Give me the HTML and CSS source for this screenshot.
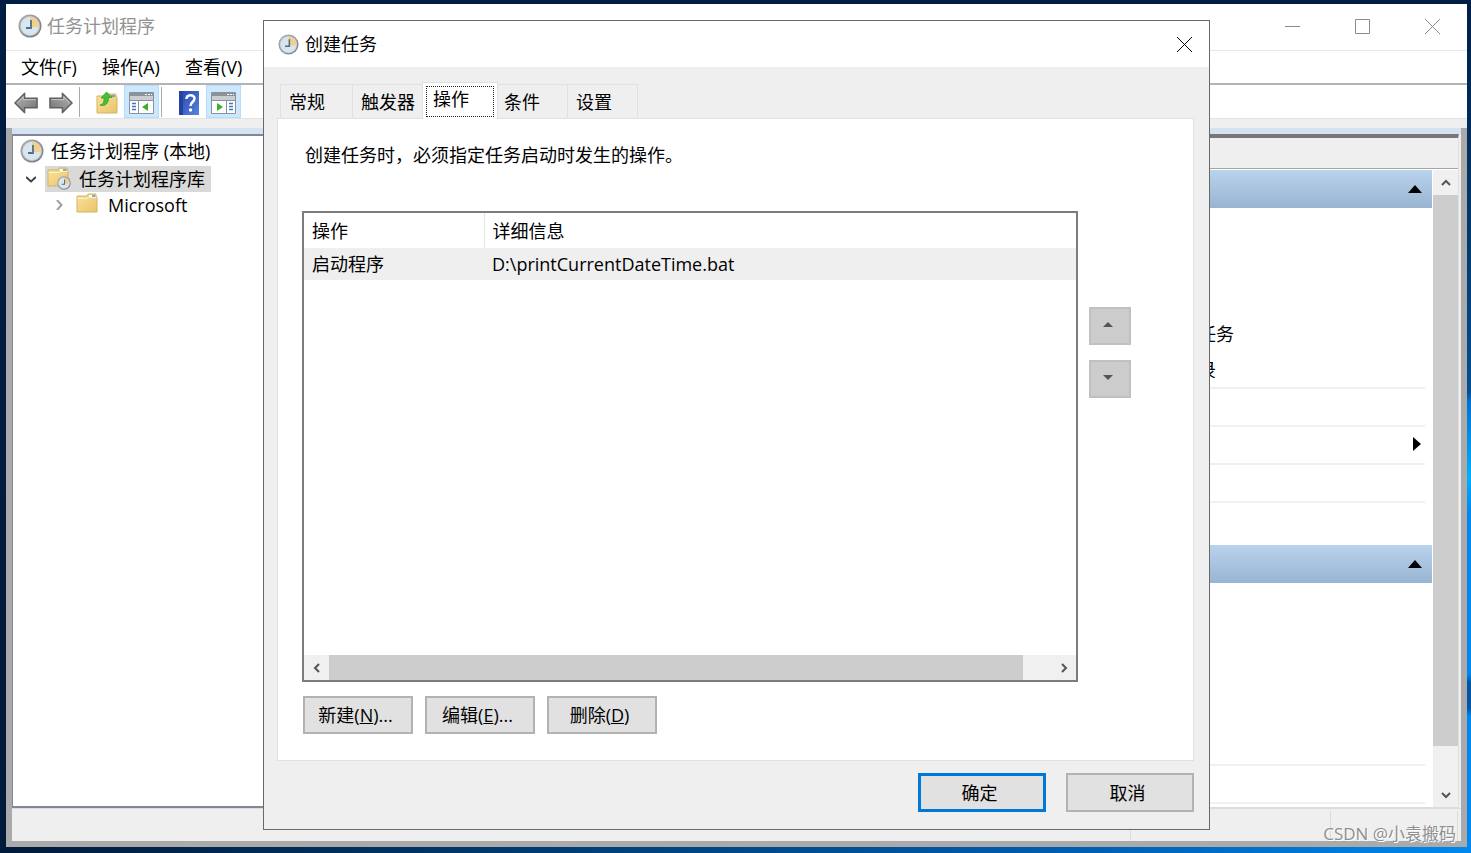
FILE: index.html
```
<!DOCTYPE html>
<html lang="zh-CN">
<head>
  <meta charset="UTF-8" />
  <title>任务计划程序</title>
  <link rel="stylesheet" href="styles.css">
</head>
<body>
  <!-- shared icons -->
  <svg class="sprites" aria-hidden="true">
    <linearGradient id="metal" x1="0" y1="0" x2="1" y2="1">
      <stop offset="0" stop-color="#a9adb0" /><stop offset="1" stop-color="#777b7e" />
    </linearGradient>
    <linearGradient id="paper" x1="0" y1="0" x2="1" y2="1">
      <stop offset="0" stop-color="#fbe39b" /><stop offset="1" stop-color="#e8c46c" />
    </linearGradient>
    <linearGradient id="steel" x1="0" y1="0" x2="1" y2="1">
      <stop offset="0" stop-color="#b8b8b8" /><stop offset="1" stop-color="#707070" />
    </linearGradient>
    <linearGradient id="book" x1="0" y1="0" x2="1" y2="1">
      <stop offset="0" stop-color="#2344b0" /><stop offset="1" stop-color="#5b83dd" />
    </linearGradient>
    <symbol id="clock" viewBox="0 0 24 24">
      <circle cx="12" cy="12" r="11.5" fill="url(#metal)" />
      <circle cx="12" cy="12" r="10" fill="#c6cacc" />
      <circle cx="12" cy="12" r="9" fill="#d9e6f0" />
      <path d="M12 13V3a9 9 0 0 1 9 10z" fill="#f3cf8c" />
      <path d="M13 6v8H8" stroke="#4f6f8a" stroke-width="1.8" fill="none" />
    </symbol>
    <symbol id="folder" viewBox="0 0 22 20">
      <path d="M1 3h10l1-2h8v3h1v15H1z" fill="url(#paper)" stroke="#d3b365" />
      <path d="M13 3h6" stroke="#fff" stroke-width="2" />
      <path d="M16 3h3" stroke="#3f93df" stroke-width="1.5" />
      <path d="M1.5 5.500H12l1-1h7.500" stroke="#fff3c8" fill="none" />
    </symbol>
    <symbol id="arrow" viewBox="0 0 26 22">
      <path d="M1 11 11 1v5h13v10H11v5z" fill="url(#steel)" stroke="#606060" stroke-width="1.500" />
      <path d="M3.500 10.500 9.500 4.500v3h13" stroke="#c8c8c8" fill="none" />
    </symbol>
  </svg>

  <div class="window">
    <header class="titlebar">
      <svg class="app-icon"><use href="#clock" /></svg>
      <h1>任务计划程序</h1>
      <div class="window-controls">
        <button aria-label="最小化"><svg viewBox="0 0 15 15"><path d="M0 7.500h15" /></svg></button>
        <button aria-label="最大化"><svg viewBox="0 0 15 15"><path d="M.5.5h14v14H.5z" /></svg></button>
        <button aria-label="关闭"><svg viewBox="0 0 15 15"><path d="M0 0l15 15M15 0 0 15" /></svg></button>
      </div>
    </header>

    <nav class="menubar">
      <button>文件(F)</button>
      <button>操作(A)</button>
      <button>查看(V)</button>
    </nav>

    <div class="toolbar">
      <button aria-label="后退"><svg class="nav-arrow" viewBox="0 0 26 22"><use href="#arrow" /></svg></button>
      <button aria-label="前进"><svg class="nav-arrow" viewBox="0 0 26 22"><use href="#arrow" transform="matrix(-1 0 0 1 26 0)" /></svg></button>
      <span class="separator"></span>
      <button aria-label="上一级">
        <svg width="22" height="24" viewBox="0 0 22 24">
          <path d="M1 5h10l1-2h8v3h1v16H1z" fill="url(#paper)" stroke="#d3b365" />
          <path d="M15 5h4" stroke="#3f93df" stroke-width="1.500" />
          <path d="M4 14c4-1 4-4 4-7H5L10.500 1 16 6.500h-3.500C13 12 9 16 4 14z" fill="#45bf35" stroke="#2f9327" stroke-width=".7" />
        </svg>
      </button>
      <button class="active" aria-label="控制台树">
        <svg width="25" height="22" viewBox="0 0 25 22">
          <path d="M.5.500h24v21H.5z" fill="#fff" stroke="#8a929b" />
          <path d="M1 1h23v3H1z" fill="#8a929b" />
          <path d="M16 2.500h2M19 2.500h2M22 2.500h1" stroke="#fff" />
          <path d="M1 4h23v4H1z" fill="#c9ced3" />
          <path d="M1 8.500h23M9.500 9v12" stroke="#8a929b" />
          <path d="M3 11.500h4M3 14.500h4M3 17.500h4" stroke="#3e78c5" stroke-width="1.500" />
          <path d="M19 11v8l-6-4z" fill="#3dae2b" />
        </svg>
      </button>
      <span class="separator"></span>
      <button aria-label="帮助">
        <svg width="20" height="24" viewBox="0 0 20 24">
          <path d="M0 0h20v24H0z" fill="url(#book)" />
          <path d="M0 0h4v24H0z" fill="#24429f" />
          <path d="M7.500 8c0-5 8-5 8-.5 0 3.500-4 3.500-4 7.500" stroke="#fff" stroke-width="2.500" fill="none" />
          <circle cx="11.500" cy="19" r="1.700" fill="#fff" />
        </svg>
      </button>
      <button class="active" aria-label="操作窗格">
        <svg width="25" height="22" viewBox="0 0 25 22">
          <path d="M.5.500h24v21H.5z" fill="#fff" stroke="#8a929b" />
          <path d="M1 1h23v3H1z" fill="#8a929b" />
          <path d="M16 2.500h2M19 2.500h2M22 2.500h1" stroke="#fff" />
          <path d="M1 4h23v4H1z" fill="#c9ced3" />
          <path d="M1 8.500h23M15.500 9v12" stroke="#8a929b" />
          <path d="M18 11.500h4M18 14.500h4M18 17.500h4" stroke="#3e78c5" stroke-width="1.500" />
          <path d="M6 11v8l6-4z" fill="#3dae2b" />
        </svg>
      </button>
    </div>

    <div class="workspace">
      <div class="panes">
        <ul class="tree">
          <li><svg class="tree-clock"><use href="#clock" /></svg><span>任务计划程序 (本地)</span></li>
          <li class="library">
            <svg class="twisty" viewBox="0 0 10 10"><path d="M0 3l5 4.500L10 3" /></svg>
            <span class="selected">
              <svg class="library-icon" viewBox="0 0 25 23">
                <use href="#folder" width="22" height="20" />
                <use href="#clock" x="10" y="9" width="14" height="14" />
              </svg>
              任务计划程序库
            </span>
          </li>
          <li class="child">
            <svg class="twisty closed" viewBox="0 0 10 10"><path d="M3 0l4.500 5L3 10" /></svg>
            <svg class="folder-icon"><use href="#folder" /></svg>
            <span>Microsoft</span>
          </li>
        </ul>

        <aside class="actions">
          <div class="actions-header"></div>
          <div class="actions-body">
            <div class="actions-list">
              <div class="group"><svg viewBox="0 0 14 8"><path d="M0 8l7-8 7 8z" /></svg></div>
              <div class="group-items first">
                <p class="task">任务</p>
                <p class="task">录</p>
                <div class="item"></div>
                <div class="item more"><svg viewBox="0 0 8 14"><path d="M0 0l8 7-8 7z" /></svg></div>
                <div class="item"></div>
                <div class="item"></div>
              </div>
              <div class="group"><svg viewBox="0 0 14 8"><path d="M0 8l7-8 7 8z" /></svg></div>
              <div class="group-items second">
                <div class="item"></div>
                <div class="item"></div>
              </div>
            </div>
            <div class="scrollbar vertical">
              <button aria-label="向上滚动"><svg viewBox="0 0 10 10"><path d="M1 7l4-4 4 4" /></svg></button>
              <div class="thumb"></div>
              <button aria-label="向下滚动"><svg viewBox="0 0 10 10"><path d="M1 3l4 4 4-4" /></svg></button>
            </div>
          </div>
        </aside>
      </div>
      <footer class="statusbar"><span></span><span></span></footer>
    </div>
  </div>

  <section class="dialog" role="dialog" aria-labelledby="dialogTitle">
    <header class="dialog-title">
      <svg><use href="#clock" /></svg>
      <h2 id="dialogTitle">创建任务</h2>
      <button aria-label="关闭"><svg viewBox="0 0 15 15"><path d="M0 0l15 15M15 0 0 15" /></svg></button>
    </header>

    <div class="dialog-body">
      <div class="tabs" role="tablist">
        <button role="tab">常规</button>
        <button role="tab">触发器</button>
        <button role="tab" class="current" aria-selected="true"><span>操作</span></button>
        <button role="tab">条件</button>
        <button role="tab">设置</button>
      </div>

      <div class="tab-panel">
        <p class="hint">创建任务时，必须指定任务启动时发生的操作。</p>
        <div class="list-row">
          <div class="list">
            <table>
              <thead>
                <tr><th>操作</th><th>详细信息</th></tr>
              </thead>
              <tbody>
                <tr><td>启动程序</td><td>D:\printCurrentDateTime.bat</td></tr>
              </tbody>
            </table>
            <div class="scrollbar horizontal">
              <button aria-label="向左滚动"><svg viewBox="0 0 10 10"><path d="M7 1L3 5l4 4" /></svg></button>
              <div class="thumb"></div>
              <button aria-label="向右滚动"><svg viewBox="0 0 10 10"><path d="M3 1l4 4-4 4" /></svg></button>
            </div>
          </div>
          <div class="order">
            <button aria-label="上移" disabled><svg viewBox="0 0 10 5"><path d="M0 5l5-5 5 5z" /></svg></button>
            <button aria-label="下移" disabled><svg viewBox="0 0 10 5"><path d="M0 0l5 5 5-5z" /></svg></button>
          </div>
        </div>
        <div class="edit-buttons">
          <button class="btn">新建(<u>N</u>)...</button>
          <button class="btn">编辑(<u>E</u>)...</button>
          <button class="btn">删除(<u>D</u>)</button>
        </div>
      </div>

      <div class="dialog-buttons">
        <button class="btn primary">确定</button>
        <button class="btn">取消</button>
      </div>
    </div>
  </section>

  <div class="watermark">CSDN @小袁搬码</div>
</body>
</html>
```

FILE: styles.css
```
* {
  box-sizing: border-box;
}

html, body {
  height: 100%;
  margin: 0;
}

body {
  position: relative;
  display: flex;
  padding: 4px 4px 6px 6px;
  overflow: hidden;
  font-family: "Open Sans", "Noto Sans CJK SC", sans-serif;
  font-size: 18px;
  line-height: 26px;
  color: #000;
  background:
    linear-gradient(#001f47, #003c74 30%, #004f94 46%, #0070d0 47%, #00b0ff 56%, #0088ee 60%, #0088ee 79%, #0055a5 80%, #0055a5 83%, #0088ee 84%) right / 6px 100% no-repeat,
    linear-gradient(90deg, #001a3a, #003566 30%, #0060b4 75%, #0088ee) bottom / 100% 8px no-repeat,
    linear-gradient(#001d42, #001a3a);
}

h1, h2, p, ul {
  margin: 0;
  padding: 0;
  font-size: 18px;
  font-weight: normal;
}

button {
  padding: 0;
  border: 0;
  background: none;
  font: inherit;
  color: inherit;
}

svg {
  display: block;
  flex: none;
}

.sprites {
  position: absolute;
  width: 0;
  height: 0;
}

/* Main window */
.window {
  flex: 1;
  display: flex;
  flex-direction: column;
  min-width: 0;
  background: #fff;
}

.titlebar {
  display: flex;
  align-items: center;
  height: 47px;
  padding: 0 0 2px 12px;
  border-bottom: 1px solid #e8e8e8;
  color: #929292;
}

.app-icon, .tree-clock {
  width: 24px;
  height: 24px;
}

.titlebar h1 {
  margin-left: 5px;
}

.window-controls {
  display: flex;
  margin-left: auto;
}

.window-controls button {
  display: grid;
  place-items: center;
  width: 70px;
  height: 44px;
}

.window-controls svg, .dialog-title button svg {
  width: 15px;
  height: 15px;
  fill: none;
  stroke: #8b8b8b;
}

.menubar {
  display: flex;
  gap: 25px;
  height: 34px;
  padding-left: 15px;
  border-bottom: 2px solid #b4b4b4;
}

.toolbar {
  display: flex;
  align-items: center;
  height: 34px;
  padding-left: 7px;
  border-bottom: 1px solid #e2e2e2;
}

.toolbar button {
  display: grid;
  place-items: center;
  width: 34px;
  height: 33px;
  padding-top: 3px;
}

.toolbar button:first-child {
  width: 26px;
  margin-right: 4px;
}

.toolbar .active {
  width: 35px;
  background: #cce8ff;
  border: 1px solid #b5dcfa;
}

.nav-arrow {
  width: 25px;
  height: 22px;
}

.separator {
  width: 1px;
  height: 30px;
  margin: 0 10px 0 2px;
  background: #aaa;
}

.workspace {
  flex: 1;
  display: flex;
  flex-direction: column;
  margin-top: 9px;
  border: solid #aaa;
  border-width: 0 6px 6px;
  background: #efefef;
  box-shadow: 0 -9px #efefef;
}

.panes {
  flex: 1;
  display: flex;
  justify-content: space-between;
  padding-right: 2px;
  border-top: 6px solid #d5e3f0;
}

/* Console tree */
.tree {
  width: 280px;
  border: solid #82869a;
  border-width: 2px 1px;
  background: #fff;
  list-style: none;
}

.tree li {
  display: flex;
  align-items: center;
  height: 27px;
  padding-left: 7px;
}

.tree li:first-child {
  height: 29px;
}

.tree-clock {
  margin-right: 7px;
}

.twisty {
  width: 10px;
  height: 10px;
  margin: 0 9px 0 6px;
  fill: none;
  stroke: #404040;
  stroke-width: 2;
}

.closed {
  margin: 0 12px 0 0;
  stroke: #a0a0a0;
}

.selected {
  display: flex;
  align-items: center;
  gap: 7px;
  height: 26px;
  padding: 0 6px 0 2px;
  background: #d9d9d9;
}

.library-icon {
  width: 25px;
  height: 23px;
}

.tree .child {
  height: 26px;
  padding-left: 41px;
}

.folder-icon {
  width: 22px;
  height: 20px;
  margin: 0 10px 4px 0;
}

/* Actions pane */
.actions {
  display: flex;
  flex-direction: column;
  width: 280px;
  border-top: 4px solid #777;
  border-right: 1px solid #e0e0e0;
  border-bottom: 1px solid #dcdcdc;
  background: #fff;
}

.actions-header {
  height: 31px;
  border-bottom: 1px solid #a5a5a5;
  background: #efefef;
}

.actions-body {
  flex: 1;
  display: flex;
  padding-top: 1px;
}

.actions-list {
  flex: 1;
  display: flex;
  flex-direction: column;
  margin-right: 1px;
}

.group {
  display: flex;
  align-items: center;
  justify-content: flex-end;
  height: 38px;
  padding-right: 10px;
  background: linear-gradient(#b9d3ed, #99b4d1);
}

.group svg {
  width: 14px;
  height: 8px;
}

.group-items {
  padding-right: 7px;
}

.first {
  height: 337px;
  padding-top: 107px;
}

.task {
  height: 36px;
  padding-left: 19px;
  line-height: 38px;
}

.item {
  height: 38px;
  border-top: 2px solid #f0f0f0;
}

.more {
  display: flex;
  align-items: center;
  justify-content: flex-end;
  padding: 0 4px 3px 0;
}

.more svg {
  width: 8px;
  height: 14px;
}

.second {
  flex: 1;
  display: flex;
  flex-direction: column;
  justify-content: flex-end;
}

.second .item:last-child {
  height: 5px;
}

.statusbar {
  display: flex;
  justify-content: flex-end;
  height: 33px;
  padding: 2px 3px 0 0;
  border-top: 1px solid #dcdcdc;
}

.statusbar span {
  width: 200px;
  border-left: 1px solid #dcdcdc;
}

.statusbar span:last-child {
  width: 128px;
  border-right: 1px solid #dcdcdc;
}

/* Scrollbars */
.scrollbar {
  display: flex;
  background: #f0f0f0;
}

.scrollbar button {
  display: grid;
  place-items: center;
  width: 25px;
  height: 25px;
}

.scrollbar svg {
  width: 10px;
  height: 10px;
  fill: none;
  stroke: #555;
  stroke-width: 2;
}

.thumb {
  background: #cdcdcd;
}

.vertical {
  flex-direction: column;
  justify-content: space-between;
  width: 25px;
}

.vertical .thumb {
  flex: 1;
  margin-bottom: 36px;
}

.horizontal .thumb {
  flex: 1;
  margin-right: 28px;
}

/* Create task dialog */
.dialog {
  position: absolute;
  top: 20px;
  right: 261px;
  bottom: 23px;
  left: 263px;
  display: flex;
  flex-direction: column;
  border: 1px solid #696969;
  background: #efefef;
}

.dialog-title {
  display: flex;
  align-items: center;
  height: 46px;
  padding: 0 17px 0 14px;
  background: #fff;
}

.dialog-title > svg {
  width: 21px;
  height: 21px;
}

.dialog-title h2 {
  margin-left: 6px;
}

.dialog-title button {
  margin-left: auto;
}

.dialog-title button svg {
  stroke: #000;
}

.dialog-body {
  flex: 1;
  display: flex;
  flex-direction: column;
  padding: 14px 15px 17px 13px;
}

.tabs {
  display: flex;
  align-items: flex-end;
  height: 37px;
  padding-left: 3px;
}

.tabs button {
  width: 72px;
  height: 34px;
  padding-left: 8px;
  border: 1px solid #e0e0e0;
  border-width: 1px 0 0 1px;
  text-align: left;
  white-space: nowrap;
}

.tabs button:last-child {
  width: 71px;
  border-right-width: 1px;
}

.tabs .current {
  z-index: 1;
  width: 76px;
  height: 37px;
  margin: 0 -3px -1px -2px;
  padding: 3px;
  border-right-width: 1px;
  background: #fff;
}

.current span {
  display: block;
  height: 31px;
  padding-left: 6px;
  border: 1px dotted #222;
  line-height: 24px;
}

.tab-panel {
  flex: 1;
  display: flex;
  flex-direction: column;
  padding: 23px 62px 26px 24px;
  border: 1px solid #e0e0e0;
  background: #fff;
}

.hint {
  padding-left: 3px;
}

.list-row {
  flex: 1;
  display: flex;
  gap: 11px;
  margin-top: 43px;
}

.list {
  flex: 1;
  display: flex;
  flex-direction: column;
  justify-content: space-between;
  border: 2px solid #7a7c80;
}

.list table {
  width: 100%;
  border-collapse: collapse;
  table-layout: fixed;
}

.list th, .list td {
  padding: 0 8px;
  font-weight: normal;
  text-align: left;
}

.list th {
  height: 35px;
}

.list th:first-child {
  width: 180px;
  border-right: 1px solid #e4e4e4;
}

.list td {
  height: 32px;
  background: #efefef;
}

.order {
  display: flex;
  flex-direction: column;
  gap: 15px;
  padding-top: 96px;
}

.order button {
  display: grid;
  place-items: center;
  width: 42px;
  height: 38px;
  padding: 0 4px 3px 0;
  border: 2px solid #c0c0c0;
  background: #ccc;
}

.order svg {
  width: 10px;
  height: 5px;
  fill: #555;
}

.edit-buttons {
  display: flex;
  gap: 12px;
  margin: 14px 0 0 1px;
}

.btn {
  width: 110px;
  height: 38px;
  padding-right: 5px;
  border: 2px solid #b2b2b2;
  background: #e1e1e1;
}

.dialog-buttons {
  display: flex;
  justify-content: flex-end;
  gap: 20px;
  margin-top: 12px;
}

.dialog-buttons .btn {
  width: 128px;
  height: 39px;
}

.dialog-buttons .primary {
  border: 3px solid #0078d7;
}

.watermark {
  position: absolute;
  right: 15px;
  bottom: 6px;
  font-size: 17px;
  color: #8f8f8f;
  text-shadow: 1px 1px #fff;
}
```
